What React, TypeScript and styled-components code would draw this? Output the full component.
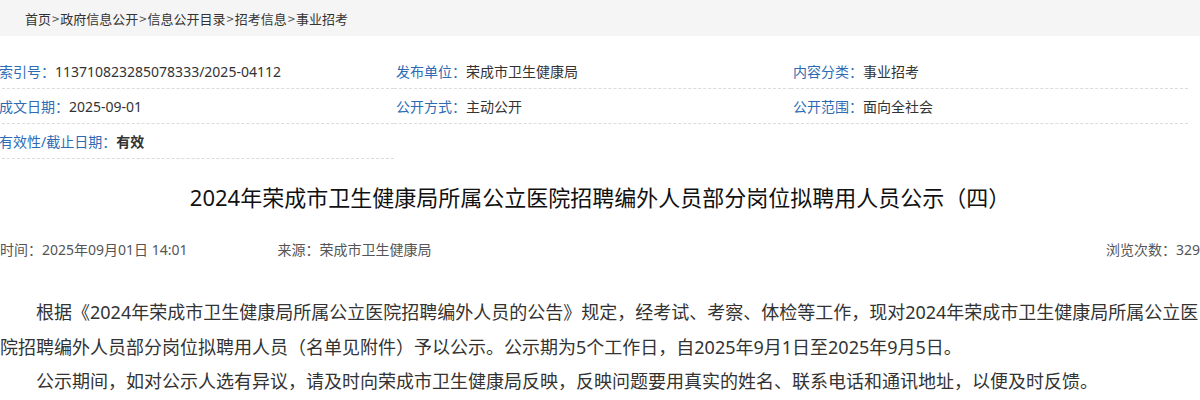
import React from "react";
import styled, { createGlobalStyle } from "styled-components";

const Global = createGlobalStyle`
  html, body { margin: 0; padding: 0; background: #fff; }
  body { font-family: "Noto Sans", "Noto Sans CJK SC", sans-serif; overflow: hidden; }
`;

const Page = styled.div`
  width: 1200px;
`;

const Breadcrumb = styled.nav`
  height: 36px;
  background: #f5f5f5;
  display: flex;
  align-items: center;
  padding-left: 25px;
  font-size: 13px;
  color: #333;
  font-family: "Noto Sans CJK SC", sans-serif;
`;

const Crumb = styled.span`
  color: #333;
`;

const Sep = styled.span`
  color: #555;
  margin: 0 1px;
`;

const MetaGrid = styled.div`
  margin-top: 18px;
  margin-left: -3px;
  display: grid;
  grid-template-columns: repeat(3, 397px);
`;

const Cell = styled.div`
  height: 34px;
  border-bottom: 1px dashed #dcdcdc;
  display: flex;
  align-items: center;
  padding-left: 2px;
  font-size: 14px;
  white-space: nowrap;
`;

const Label = styled.span`
  color: #2d6cb5;
`;

const Value = styled.span<{ $bold?: boolean }>`
  color: #333;
  font-weight: ${(p) => (p.$bold ? 700 : 400)};
`;

const Title = styled.h1`
  margin: 23px 0 0;
  text-align: center;
  font-size: 22px;
  line-height: 30px;
  font-weight: 400;
  color: #111;
`;

const InfoBar = styled.div`
  margin-top: 28px;
  display: flex;
  align-items: center;
  font-size: 14px;
  line-height: 20px;
  color: #555;
`;

const InfoItem = styled.span<{ $push?: boolean }>`
  margin-right: ${(p) => (p.$push ? 0 : 90)}px;
  margin-left: ${(p) => (p.$push ? "auto" : 0)};
`;

const Article = styled.div`
  margin-top: 35px;
  font-size: 18px;
  line-height: 34.5px;
  color: #333;
`;

const Para = styled.p`
  margin: 0;
  text-indent: 2em;
`;

const crumbs = ["首页", "政府信息公开", "信息公开目录", "招考信息", "事业招考"];

const meta: { label: string; value: string; bold?: boolean }[] = [
  { label: "索引号：", value: "113710823285078333/2025-04112" },
  { label: "发布单位：", value: "荣成市卫生健康局" },
  { label: "内容分类：", value: "事业招考" },
  { label: "成文日期：", value: "2025-09-01" },
  { label: "公开方式：", value: "主动公开" },
  { label: "公开范围：", value: "面向全社会" },
  { label: "有效性/截止日期：", value: "有效", bold: true },
];

export default function App() {
  return (
    <Page>
      <Global />
      <Breadcrumb>
        {crumbs.map((c, i) => (
          <React.Fragment key={c}>
            {i > 0 && <Sep>&gt;</Sep>}
            <Crumb>{c}</Crumb>
          </React.Fragment>
        ))}
      </Breadcrumb>
      <MetaGrid>
        {meta.map((m) => (
          <Cell key={m.label}>
            <Label>{m.label}</Label>
            <Value $bold={m.bold}>{m.value}</Value>
          </Cell>
        ))}
      </MetaGrid>
      <Title>2024年荣成市卫生健康局所属公立医院招聘编外人员部分岗位拟聘用人员公示（四）</Title>
      <InfoBar>
        <InfoItem>时间：2025年09月01日 14:01</InfoItem>
        <InfoItem>来源：荣成市卫生健康局</InfoItem>
        <InfoItem $push>浏览次数：329</InfoItem>
      </InfoBar>
      <Article>
        <Para>
          根据《2024年荣成市卫生健康局所属公立医院招聘编外人员的公告》规定，经考试、考察、体检等工作，现对2024年荣成市卫生健康局所属公立医院招聘编外人员部分岗位拟聘用人员（名单见附件）予以公示。公示期为5个工作日，自2025年9月1日至2025年9月5日。
        </Para>
        <Para>
          公示期间，如对公示人选有异议，请及时向荣成市卫生健康局反映，反映问题要用真实的姓名、联系电话和通讯地址，以便及时反馈。
        </Para>
      </Article>
    </Page>
  );
}
